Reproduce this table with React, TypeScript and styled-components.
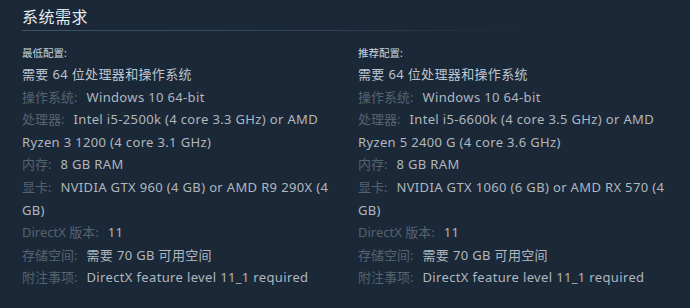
import styled, { createGlobalStyle } from "styled-components";

const GlobalStyle = createGlobalStyle`
  html, body {
    margin: 0;
    padding: 0;
    background: #1b2838;
  }
`;

//-- STYLED COMPONENTs
const Page = styled.div`
  box-sizing: border-box;
  width: 690px;
  height: 308px;
  padding: 7px 18px 0 22px;
  background: #1b2838;
  font-family: "Noto Sans", "Noto Sans CJK SC", sans-serif;
  overflow: hidden;
`;

const Title = styled.h2`
  margin: 0;
  padding-bottom: 3px;
  font-size: 16px;
  font-weight: 400;
  color: #e6eaee;
  line-height: 20px;
  letter-spacing: 0.5px;
`;

const Divider = styled.div`
  height: 1px;
  width: 500px;
  background: linear-gradient(to right, #3d5468 0%, #2f4256 60%, rgba(27, 40, 56, 0) 100%);
  margin-bottom: 15px;
`;

const Columns = styled.div`
  display: grid;
  grid-template-columns: 314px 314px;
  column-gap: 22px;
`;

const Column = styled.div`
  display: flex;
  flex-direction: column;
`;

const Heading = styled.div`
  font-size: 10.5px;
  color: #c6d4df;
  line-height: 14px;
  margin-bottom: 3px;
`;

const Row = styled.div<{ $first?: boolean }>`
  font-size: 13px;
  line-height: 22.6px;
  letter-spacing: 0.35px;
  color: ${(p) => (p.$first ? "#bcc5ce" : "#b0b7be")};
`;

const Label = styled.span`
  color: #55636f;
  letter-spacing: 0;
  margin-right: 9px;
`;

type Spec = { label: string; value: string };

type Config = { heading: string; specs: Spec[] };

const configs: Config[] = [
  {
    heading: "最低配置:",
    specs: [
      { label: "操作系统:", value: "Windows 10 64-bit" },
      { label: "处理器:", value: "Intel i5-2500k (4 core 3.3 GHz) or AMD Ryzen 3 1200 (4 core 3.1 GHz)" },
      { label: "内存:", value: "8 GB RAM" },
      { label: "显卡:", value: "NVIDIA GTX 960 (4 GB) or AMD R9 290X (4 GB)" },
      { label: "DirectX 版本:", value: "11" },
      { label: "存储空间:", value: "需要 70 GB 可用空间" },
      { label: "附注事项:", value: "DirectX feature level 11_1 required" },
    ],
  },
  {
    heading: "推荐配置:",
    specs: [
      { label: "操作系统:", value: "Windows 10 64-bit" },
      { label: "处理器:", value: "Intel i5-6600k (4 core 3.5 GHz) or AMD Ryzen 5 2400 G (4 core 3.6 GHz)" },
      { label: "内存:", value: "8 GB RAM" },
      { label: "显卡:", value: "NVIDIA GTX 1060 (6 GB) or AMD RX 570 (4 GB)" },
      { label: "DirectX 版本:", value: "11" },
      { label: "存储空间:", value: "需要 70 GB 可用空间" },
      { label: "附注事项:", value: "DirectX feature level 11_1 required" },
    ],
  },
];

const App: React.FC = () => {
  return (
    <Page>
      <GlobalStyle />
      <Title>系统需求</Title>
      <Divider />
      <Columns>
        {configs.map((c) => (
          <Column key={c.heading}>
            <Heading>{c.heading}</Heading>
            <Row $first>需要 64 位处理器和操作系统</Row>
            {c.specs.map((s) => (
              <Row key={s.label}>
                <Label>{s.label}</Label>
                {s.value}
              </Row>
            ))}
          </Column>
        ))}
      </Columns>
    </Page>
  );
};

export default App;
